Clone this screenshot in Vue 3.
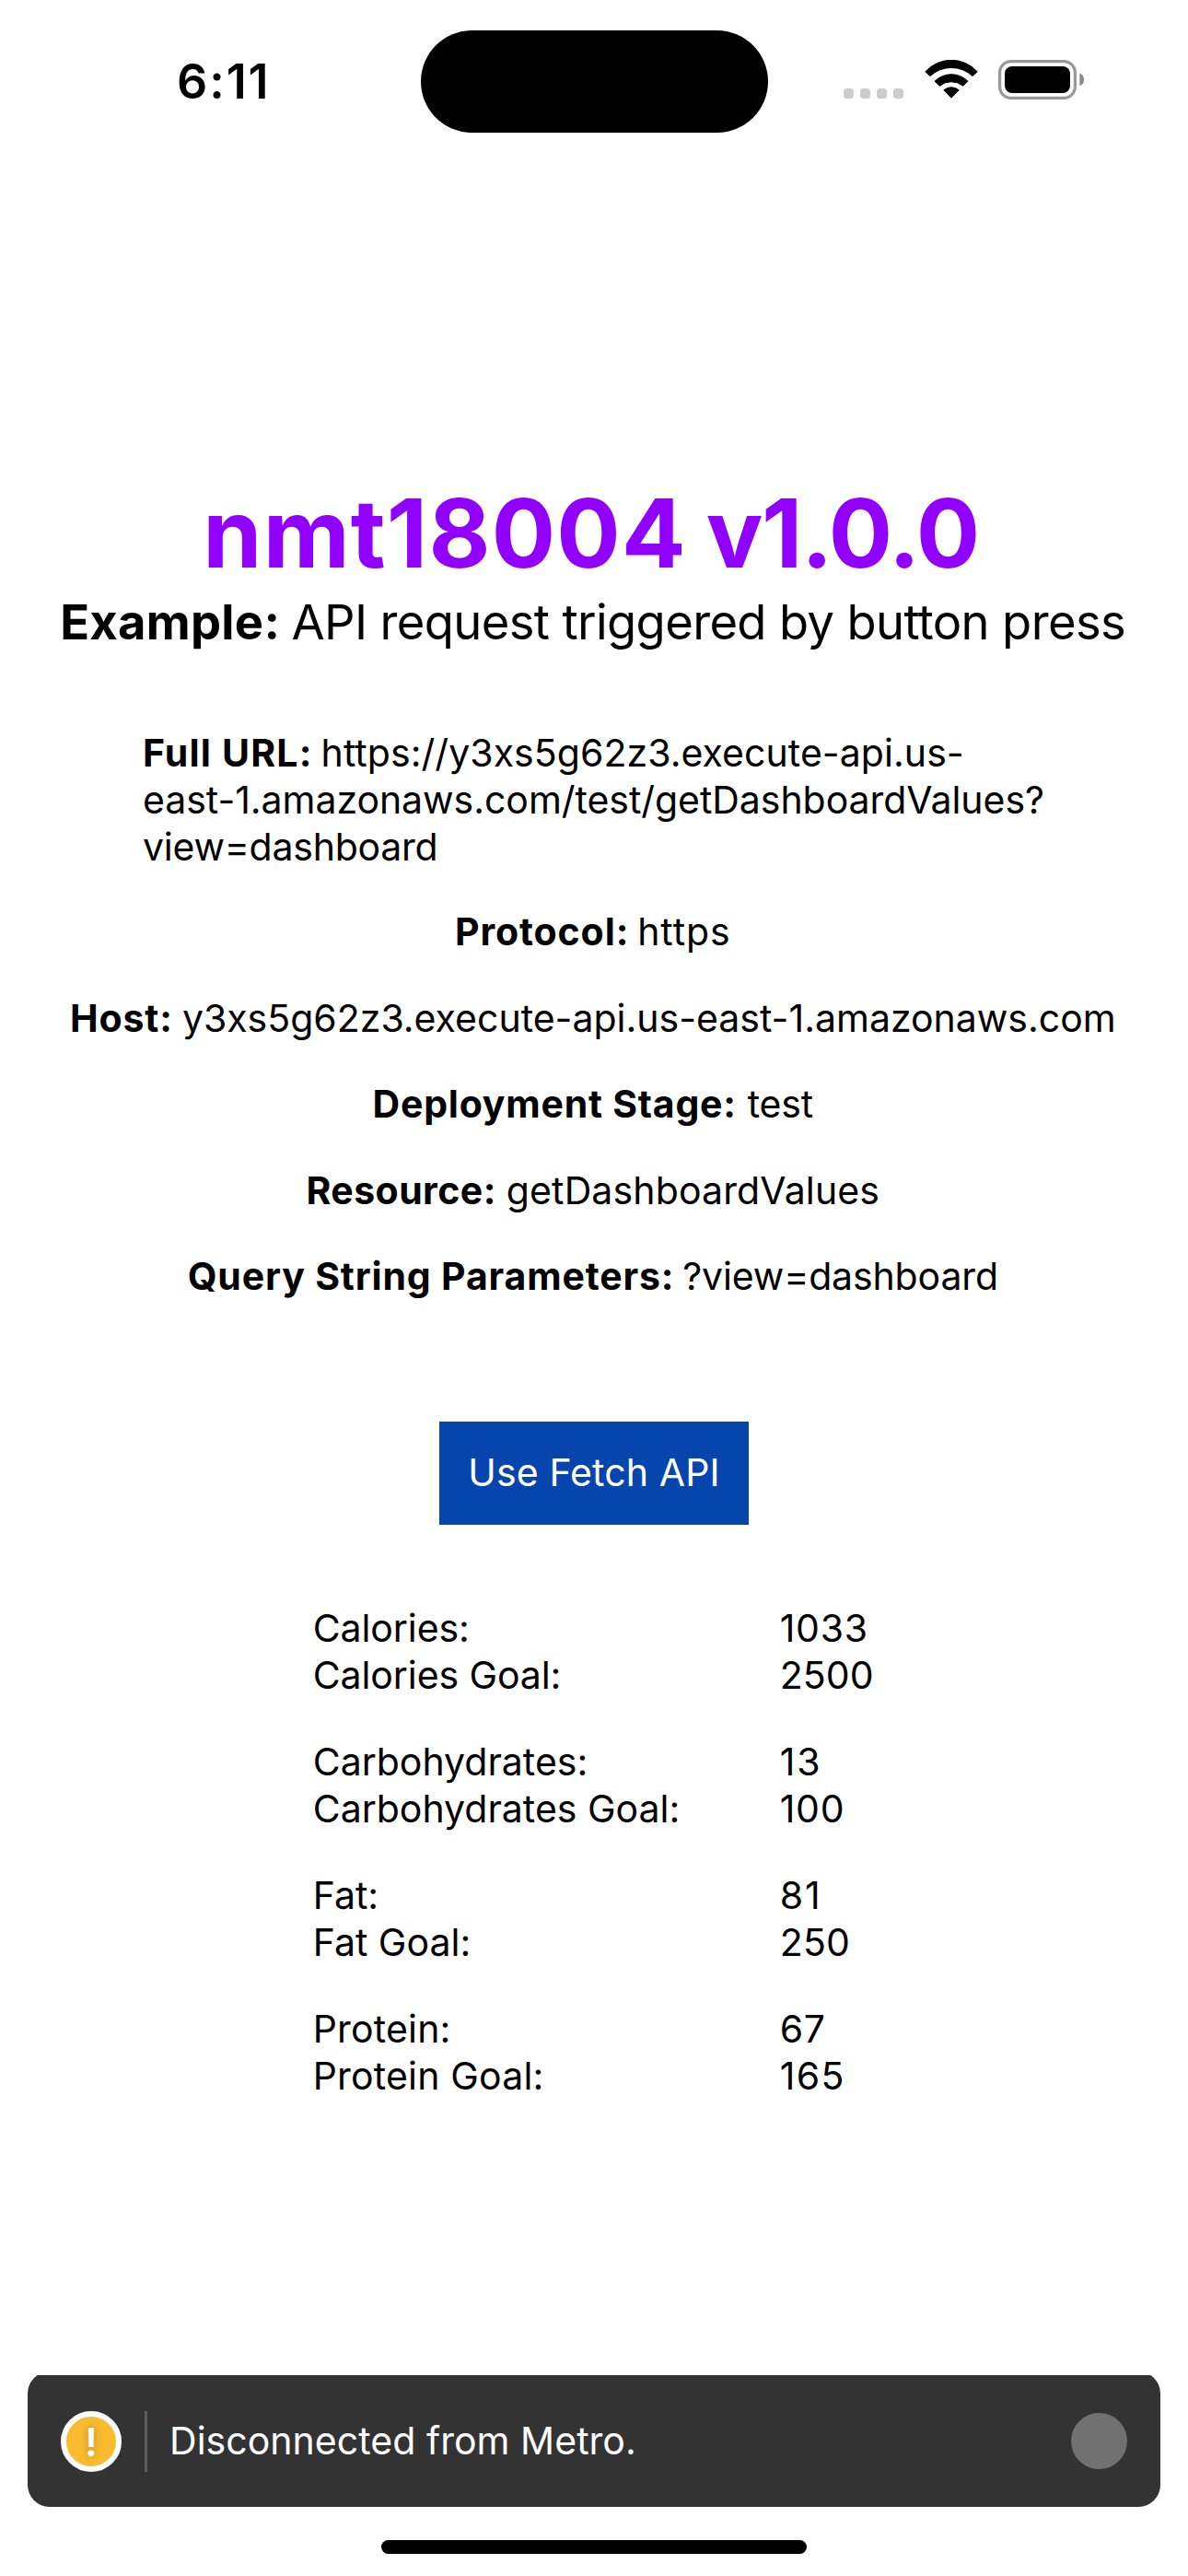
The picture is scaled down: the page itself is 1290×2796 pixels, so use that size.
<script setup>
const details = [
  { label: 'Protocol:', value: 'https', key: 'protocol' },
  { label: 'Host:', value: 'y3xs5g62z3.execute-api.us-east-1.amazonaws.com', key: 'host' },
  { label: 'Deployment Stage:', value: 'test', key: 'stage' },
  { label: 'Resource:', value: 'getDashboardValues', key: 'resource' },
  { label: 'Query String Parameters:', value: '?view=dashboard', key: 'query' },
]

const nutrients = [
  { name: 'Calories', value: 1033, goal: 2500 },
  { name: 'Carbohydrates', value: 13, goal: 100 },
  { name: 'Fat', value: 81, goal: 250 },
  { name: 'Protein', value: 67, goal: 165 },
]
</script>

<template>
  <div class="screen">
    <header class="status-bar">
      <span class="time">6:11</span>
      <div class="island"></div>
      <div class="indicators">
        <div class="signal"><i v-for="n in 4" :key="n"></i></div>
        <svg class="wifi" width="58" height="42" viewBox="0 0 58 42">
          <g stroke="#000" stroke-width="1" stroke-linejoin="round">
            <path d="M.8 13A38 38 0 0 1 57.2 13L52 17.8A33.5 33.5 0 0 0 6 17.8Z" transform="translate(0 -.2)" />
            <path d="M11 23.2A25.4 25.4 0 0 1 47 23.2L41.6 28.2A20 20 0 0 0 16.4 28.2Z" />
            <path d="M20.8 32.8A12.6 12.6 0 0 1 37.2 32.8L29 41.2Z" />
          </g>
        </svg>
        <svg class="battery" width="94" height="43" viewBox="0 0 94 43">
          <rect x="1.6" y="1.6" width="81.8" height="39.8" rx="12.4" fill="none" stroke="#999" stroke-width="3.2" />
          <rect x="7" y="7" width="71" height="29" rx="8" />
          <path d="M88.3 14.5A7.4 7.4 0 0 1 88.3 28.3Z" fill="#8a8a8a" />
        </svg>
      </div>
    </header>

    <main class="content">
      <h1 class="title"><span class="name">nmt18004</span><span class="version">v1.0.0</span></h1>
      <p class="subtitle"><b>Example:</b><span>API request triggered by button press</span></p>

      <div class="full-url">
        <p class="line"><b>Full URL:</b><span>https://y3xs5g62z3.execute-api.us-</span></p>
        <p class="line">east-1.amazonaws.com/test/getDashboardValues?</p>
        <p class="line narrow">view=dashboard</p>
      </div>

      <div class="details">
        <p v-for="d in details" :key="d.key" :class="['line', d.key]"><b>{{ d.label }}</b><span>{{ d.value }}</span></p>
      </div>

      <button class="fetch" type="button">Use Fetch API</button>

      <div class="nutrients">
        <dl v-for="n in nutrients" :key="n.name" :class="n.name.toLowerCase()">
          <dt>{{ n.name }}:</dt><dd>{{ n.value }}</dd>
          <dt>{{ n.name }} Goal:</dt><dd class="goal">{{ n.goal }}</dd>
        </dl>
      </div>
    </main>

    <footer class="banner">
      <div class="alert"><span>!</span></div>
      <div class="divider"></div>
      <span class="message">Disconnected from Metro.</span>
      <div class="dismiss"></div>
    </footer>
    <div class="home-indicator"></div>
  </div>
</template>

<style>
body { margin: 0; background: #fff; }
</style>

<style scoped>
.screen {
  box-sizing: border-box;
  width: 1290px;
  height: 2796px;
  padding-bottom: 24px;
  display: flex;
  flex-direction: column;
  overflow: hidden;
  background: #fff;
  color: #000;
  font: 400 41px/51px Inter, "Noto Sans", sans-serif;
  white-space: nowrap;
}
p, h1, dl, dd { margin: 0; }

.status-bar {
  box-sizing: border-box;
  height: 177px;
  flex: none;
  display: flex;
  align-items: flex-start;
  padding-left: 192px;
}
.time {
  width: 265px;
  margin-top: 57px;
  font-size: 52px;
  line-height: 63px;
  font-weight: 600;
  letter-spacing: 1.9px;
}
.island {
  width: 377px;
  height: 111px;
  margin-top: 33.4px;
  border-radius: 56px;
  background: #000;
}
.indicators { display: flex; align-items: flex-start; margin-top: 65px; }
.signal { display: flex; gap: 7px; margin: 31px 0 0 82px; }
.signal i { width: 11px; height: 11px; border-radius: 3.5px; background: #ccc; }
.wifi { margin-left: 22.5px; }
.battery { margin-left: 22.5px; }

.content { display: flex; flex-direction: column; align-items: center; }
.title {
  display: flex;
  gap: 21px;
  margin-top: 339px;
  padding-right: 7px;
  color: #9100ff;
  font-size: 103px;
  line-height: 125px;
  font-weight: 700;
}
.name { letter-spacing: 1.2px; }
.version { letter-spacing: -1.5px; }
.subtitle {
  display: flex;
  gap: 12.2px;
  margin: 2px 0 85px;
  padding-right: 2.8px;
  font-size: 52.5px;
  line-height: 64px;
}
.subtitle b { letter-spacing: 0.29px; }
.subtitle span { letter-spacing: -0.63px; }

.line { display: flex; gap: 9px; }
.full-url { align-self: flex-start; margin-left: 155px; }
.full-url b { letter-spacing: 1.18px; }
.full-url span { letter-spacing: 0.055px; }
.full-url .line { letter-spacing: -0.047px; }
.full-url .narrow { letter-spacing: -0.238px; }

.details {
  display: flex;
  flex-direction: column;
  align-items: center;
  gap: 42.5px;
  margin-top: 41.3px;
  padding-right: 2.4px;
}
.protocol b { letter-spacing: 0.88px; }
.protocol span { letter-spacing: 0.9px; }
.host { gap: 10px; }
.host b { letter-spacing: 0.91px; }
.stage { gap: 12px; }
.stage b { letter-spacing: 0.771px; }
.stage span { letter-spacing: -0.19px; }
.resource { gap: 11px; }
.resource b { letter-spacing: 0.434px; }
.resource span { letter-spacing: 0.139px; }
.query b { letter-spacing: 0.828px; }
.query span { letter-spacing: -0.14px; }

.fetch {
  box-sizing: border-box;
  width: 336px;
  height: 112px;
  margin: 131.7px 0 87px;
  padding: 30px 0 31px;
  border: 0;
  background: #0645ad;
  color: #fff;
  font: inherit;
  letter-spacing: 0.12px;
}

.nutrients {
  align-self: flex-start;
  display: flex;
  flex-direction: column;
  gap: 43px;
  margin-left: 339.7px;
}
dl { display: grid; grid-template-columns: 507px auto; }
dd { letter-spacing: 0.7px; }
.calories dt { letter-spacing: -0.09px; }
.calories .goal { letter-spacing: 0.1px; }
.carbohydrates dd { letter-spacing: 1.8px; }
.carbohydrates .goal { letter-spacing: 0.72px; }
.fat dd { letter-spacing: 2px; }
.fat .goal { letter-spacing: 0.2px; }
.protein dt { letter-spacing: 0.18px; }
.protein dd { letter-spacing: 0.56px; }
.protein .goal { letter-spacing: 1.4px; }

/* The banner's top edge sits 4px under the clip line, trimming its upper corners. */
.banner {
  box-sizing: border-box;
  position: relative;
  width: 1230px;
  height: 147px;
  flex: none;
  margin: auto 30px 36px;
  padding: 4px 36px 0;
  display: flex;
  align-items: center;
  border-radius: 24px;
  clip-path: inset(4px 0 0 0);
  background: #333;
  color: #fff;
}
.alert {
  box-sizing: border-box;
  width: 66px;
  height: 66px;
  display: flex;
  justify-content: center;
  border: 6px solid #fff;
  border-radius: 50%;
  background: #fabb30;
}
.alert span {
  font-size: 42px;
  line-height: 51px;
  margin-top: 2px;
  font-weight: 600;
  text-shadow: 0 0 9px rgba(0, 0, 0, 0.3);
}
.divider { width: 3px; height: 66px; margin: 0 24px 0 25px; background: #5c5c5c; }
.message { letter-spacing: 0.037px; }
.dismiss {
  width: 61px;
  height: 61px;
  margin-left: auto;
  border-radius: 50%;
  background: #717171;
}
.home-indicator {
  width: 462px;
  height: 15px;
  flex: none;
  align-self: center;
  border-radius: 8px;
  background: #000;
}
</style>
